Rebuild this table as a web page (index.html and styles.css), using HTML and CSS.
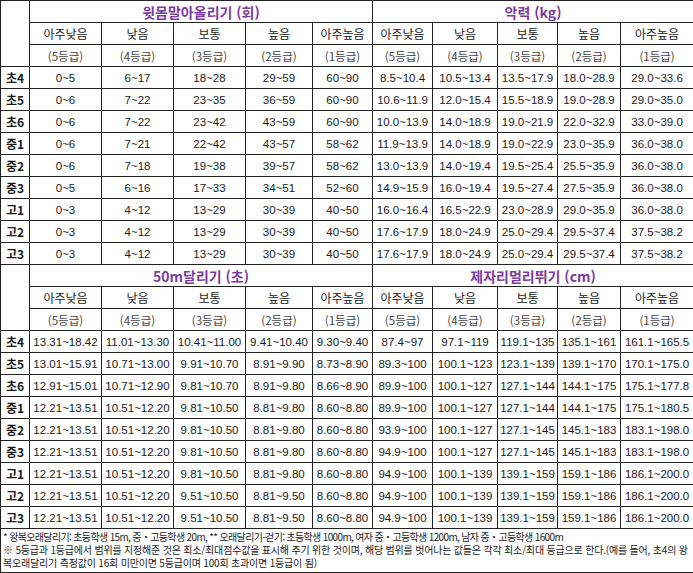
FILE: index.html
```html
<!DOCTYPE html>
<html lang="ko">
<head>
<meta charset="utf-8">
<title>PAPS 등급표</title>
<link rel="stylesheet" href="styles.css">
</head>
<body>
<table class="grade-table">
  <colgroup>
    <col class="c-label">
    <col class="c-a"><col class="c-a"><col class="c-a"><col class="c-b"><col class="c-c">
    <col class="c-c"><col class="c-d"><col class="c-c"><col class="c-e"><col class="c-f">
  </colgroup>
  <tbody>
    <tr>
      <td class="corner" rowspan="3"></td>
      <td class="title" colspan="5">윗몸말아올리기 (회)</td>
      <td class="title" colspan="5">악력 (kg)</td>
    </tr>
    <tr class="head">
      <td>아주낮음</td><td>낮음</td><td>보통</td><td>높음</td><td>아주높음</td>
      <td>아주낮음</td><td>낮음</td><td>보통</td><td>높음</td><td>아주높음</td>
    </tr>
    <tr class="grade">
      <td>(5등급)</td><td>(4등급)</td><td>(3등급)</td><td>(2등급)</td><td>(1등급)</td>
      <td>(5등급)</td><td>(4등급)</td><td>(3등급)</td><td>(2등급)</td><td>(1등급)</td>
    </tr>
    <tr><th>초4</th><td>0~5</td><td>6~17</td><td>18~28</td><td>29~59</td><td>60~90</td><td>8.5~10.4</td><td>10.5~13.4</td><td>13.5~17.9</td><td>18.0~28.9</td><td>29.0~33.6</td></tr>
    <tr><th>초5</th><td>0~6</td><td>7~22</td><td>23~35</td><td>36~59</td><td>60~90</td><td>10.6~11.9</td><td>12.0~15.4</td><td>15.5~18.9</td><td>19.0~28.9</td><td>29.0~35.0</td></tr>
    <tr><th>초6</th><td>0~6</td><td>7~22</td><td>23~42</td><td>43~59</td><td>60~90</td><td>10.0~13.9</td><td>14.0~18.9</td><td>19.0~21.9</td><td>22.0~32.9</td><td>33.0~39.0</td></tr>
    <tr><th>중1</th><td>0~6</td><td>7~21</td><td>22~42</td><td>43~57</td><td>58~62</td><td>11.9~13.9</td><td>14.0~18.9</td><td>19.0~22.9</td><td>23.0~35.9</td><td>36.0~38.0</td></tr>
    <tr><th>중2</th><td>0~6</td><td>7~18</td><td>19~38</td><td>39~57</td><td>58~62</td><td>13.0~13.9</td><td>14.0~19.4</td><td>19.5~25.4</td><td>25.5~35.9</td><td>36.0~38.0</td></tr>
    <tr><th>중3</th><td>0~5</td><td>6~16</td><td>17~33</td><td>34~51</td><td>52~60</td><td>14.9~15.9</td><td>16.0~19.4</td><td>19.5~27.4</td><td>27.5~35.9</td><td>36.0~38.0</td></tr>
    <tr><th>고1</th><td>0~3</td><td>4~12</td><td>13~29</td><td>30~39</td><td>40~50</td><td>16.0~16.4</td><td>16.5~22.9</td><td>23.0~28.9</td><td>29.0~35.9</td><td>36.0~38.0</td></tr>
    <tr><th>고2</th><td>0~3</td><td>4~12</td><td>13~29</td><td>30~39</td><td>40~50</td><td>17.6~17.9</td><td>18.0~24.9</td><td>25.0~29.4</td><td>29.5~37.4</td><td>37.5~38.2</td></tr>
    <tr><th>고3</th><td>0~3</td><td>4~12</td><td>13~29</td><td>30~39</td><td>40~50</td><td>17.6~17.9</td><td>18.0~24.9</td><td>25.0~29.4</td><td>29.5~37.4</td><td>37.5~38.2</td></tr>

    <tr>
      <td class="corner" rowspan="3"></td>
      <td class="title" colspan="5">50m달리기 (초)</td>
      <td class="title" colspan="5">제자리멀리뛰기 (cm)</td>
    </tr>
    <tr class="head">
      <td>아주낮음</td><td>낮음</td><td>보통</td><td>높음</td><td>아주높음</td>
      <td>아주낮음</td><td>낮음</td><td>보통</td><td>높음</td><td>아주높음</td>
    </tr>
    <tr class="grade">
      <td>(5등급)</td><td>(4등급)</td><td>(3등급)</td><td>(2등급)</td><td>(1등급)</td>
      <td>(5등급)</td><td>(4등급)</td><td>(3등급)</td><td>(2등급)</td><td>(1등급)</td>
    </tr>
    <tr><th>초4</th><td>13.31~18.42</td><td>11.01~13.30</td><td>10.41~11.00</td><td>9.41~10.40</td><td>9.30~9.40</td><td>87.4~97</td><td>97.1~119</td><td>119.1~135</td><td>135.1~161</td><td>161.1~165.5</td></tr>
    <tr><th>초5</th><td>13.01~15.91</td><td>10.71~13.00</td><td>9.91~10.70</td><td>8.91~9.90</td><td>8.73~8.90</td><td>89.3~100</td><td>100.1~123</td><td>123.1~139</td><td>139.1~170</td><td>170.1~175.0</td></tr>
    <tr><th>초6</th><td>12.91~15.01</td><td>10.71~12.90</td><td>9.81~10.70</td><td>8.91~9.80</td><td>8.66~8.90</td><td>89.9~100</td><td>100.1~127</td><td>127.1~144</td><td>144.1~175</td><td>175.1~177.8</td></tr>
    <tr><th>중1</th><td>12.21~13.51</td><td>10.51~12.20</td><td>9.81~10.50</td><td>8.81~9.80</td><td>8.60~8.80</td><td>89.9~100</td><td>100.1~127</td><td>127.1~144</td><td>144.1~175</td><td>175.1~180.5</td></tr>
    <tr><th>중2</th><td>12.21~13.51</td><td>10.51~12.20</td><td>9.81~10.50</td><td>8.81~9.80</td><td>8.60~8.80</td><td>93.9~100</td><td>100.1~127</td><td>127.1~145</td><td>145.1~183</td><td>183.1~198.0</td></tr>
    <tr><th>중3</th><td>12.21~13.51</td><td>10.51~12.20</td><td>9.81~10.50</td><td>8.81~9.80</td><td>8.60~8.80</td><td>94.9~100</td><td>100.1~127</td><td>127.1~145</td><td>145.1~183</td><td>183.1~198.0</td></tr>
    <tr><th>고1</th><td>12.21~13.51</td><td>10.51~12.20</td><td>9.81~10.50</td><td>8.81~9.80</td><td>8.60~8.80</td><td>94.9~100</td><td>100.1~139</td><td>139.1~159</td><td>159.1~186</td><td>186.1~200.0</td></tr>
    <tr><th>고2</th><td>12.21~13.51</td><td>10.51~12.20</td><td>9.51~10.50</td><td>8.81~9.50</td><td>8.60~8.80</td><td>94.9~100</td><td>100.1~139</td><td>139.1~159</td><td>159.1~186</td><td>186.1~200.0</td></tr>
    <tr><th>고3</th><td>12.21~13.51</td><td>10.51~12.20</td><td>9.51~10.50</td><td>8.81~9.50</td><td>8.60~8.80</td><td>94.9~100</td><td>100.1~139</td><td>139.1~159</td><td>159.1~186</td><td>186.1~200.0</td></tr>

    <tr>
      <td class="note" colspan="11">
        <p>* 왕복오래달리기: 초등학생 15m, 중・고등학생 20m, ** 오래달리기-걷기: 초등학생 1000m, 여자 중・고등학생 1200m, 남자 중・고등학생 1600m</p>
        <p class="note-wide">※ 5등급과 1등급에서 범위를 지정해준 것은 최소/최대점수값을 표시해 주기 위한 것이며, 해당 범위를 벗어나는 값들은 각각 최소/최대 등급으로 한다.(예를 들어, 초4의 왕복오래달리기 측정값이 16회 미만이면 5등급이며 100회 초과이면 1등급이 됨)</p>
      </td>
    </tr>
  </tbody>
</table>
</body>
</html>
```

FILE: styles.css
```css
html, body {
  margin: 0;
  padding: 0;
  background: #ffffff;
}

body {
  font-family: "Liberation Sans", "Noto Sans CJK KR", sans-serif;
  color: #1a1a1a;
}

.grade-table {
  width: 693px;
  table-layout: fixed;
  border-collapse: collapse;
  border: 1px solid #222;
}

.c-label { width: 29px; }
.c-a { width: 72px; }
.c-b { width: 67px; }
.c-c { width: 60px; }
.c-d { width: 65px; }
.c-e { width: 63px; }
.c-f { width: 73px; }

.grade-table tr {
  height: 22px;
}

.grade-table td,
.grade-table th {
  border: 1px solid #222;
  padding: 0;
  text-align: center;
  vertical-align: middle;
  white-space: nowrap;
  overflow: hidden;
  font-size: 11.5px;
  line-height: 14px;
  font-weight: normal;
}

.grade-table th {
  font-family: "Noto Sans CJK KR", sans-serif;
  font-size: 12px;
  font-weight: bold;
  color: #1a1a1a;
}

.grade-table .title {
  font-family: "Noto Sans CJK KR", sans-serif;
  font-size: 14px;
  font-weight: bold;
  color: #7a3c9e;
}

.grade-table .head td {
  font-family: "Noto Sans CJK KR", sans-serif;
  font-size: 12px;
  color: #222;
}

.grade-table .grade td {
  font-family: "Noto Sans CJK KR", sans-serif;
  font-size: 11.5px;
  color: #444;
}

.grade-table .note {
  text-align: left;
  white-space: normal;
  padding: 1px 2px 3px 2px;
  font-family: "Noto Sans CJK KR", sans-serif;
  font-size: 10px;
  line-height: 13px;
  color: #222;
  letter-spacing: -0.65px;
}

.note p {
  margin: 0;
}

.note .note-wide {
  letter-spacing: -0.19px;
}
```
